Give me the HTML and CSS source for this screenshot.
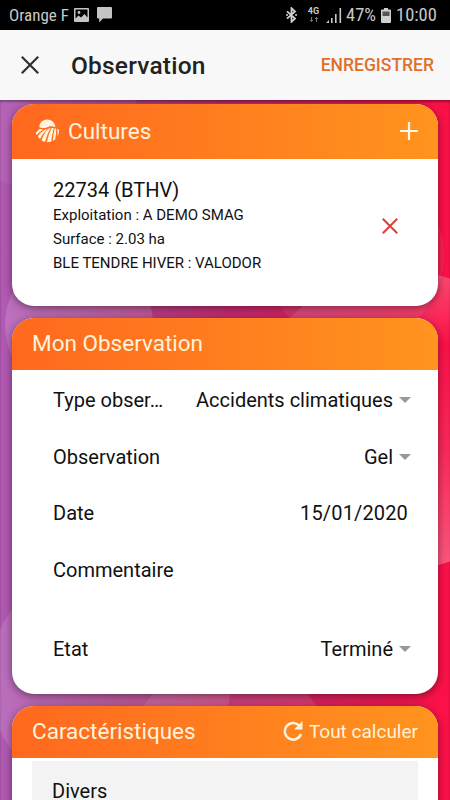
FILE: index.html
```
<!DOCTYPE html>
<html lang="fr">
  <head>
    <meta charset="UTF-8">
    <meta name="viewport" content="width=device-width, initial-scale=1.0">
    <title>Observation</title>
    <link rel="stylesheet" href="styles.css">
  </head>
  <body>
    <div class="status-bar">
      <span class="carrier">Orange F</span>
      <svg class="icon-image" width="15" height="14" viewBox="0 0 15 14">
        <path fill="#c4c4c4" fill-rule="evenodd" d="M1 0h13a1 1 0 0 1 1 1v12a1 1 0 0 1-1 1H1a1 1 0 0 1-1-1V1a1 1 0 0 1 1-1zM1.500 1.500v9l3-3 2.500 2 3.500-3.500 3 3.500v-8z"/>
        <circle cx="5" cy="4.500" r="1.400" fill="#c4c4c4"/>
      </svg>
      <svg class="icon-message" width="15" height="16" viewBox="0 0 15 16">
        <path fill="#c4c4c4" d="M1 0h13a1 1 0 0 1 1 1v9.500a1 1 0 0 1-1 1H6L2.200 15.500V11.500H1a1 1 0 0 1-1-1V1a1 1 0 0 1 1-1z"/>
      </svg>
      <div class="status-right">
        <svg width="11" height="16" viewBox="0 0 11 16">
          <path fill="none" stroke="#d0d0d0" stroke-width="1.800" d="M1 4.300l8 7.200-3.500 3.300V1.200L9 4.500l-8 7.200M.3 8h1.500M9.300 8h1.500"/>
        </svg>
        <div class="network">
          <span>4G</span>
          <svg width="10" height="5" viewBox="0 0 10 5">
            <path fill="none" stroke="#777" d="M2.500 0v4.500M1 3l1.500 1.500L4 3M7.500 5V.5M6 2L7.500.5 9 2"/>
          </svg>
        </div>
        <svg class="signal" width="16" height="15" viewBox="0 0 16 15">
          <path fill="#c8c8c8" d="M0 15l3-3v3zM5 10h1.600v5H5zM9 6h1.600v9H9zM13.500 0h1.600v15h-1.600z"/>
        </svg>
        <span class="percent">47%</span>
        <svg class="battery" width="10" height="15" viewBox="0 0 10 15">
          <path fill="#d0d0d0" d="M3 0h4v1.500h2a1 1 0 0 1 1 1V14a1 1 0 0 1-1 1H1a1 1 0 0 1-1-1V2.500a1 1 0 0 1 1-1h2z"/>
          <path fill="#555" d="M1.500 3.500h7V8h-7z"/>
        </svg>
        <span class="clock">10:00</span>
      </div>
    </div>

    <header class="toolbar">
      <svg class="close" width="18" height="18" viewBox="0 0 18 18">
        <path fill="none" stroke="#303030" stroke-width="2.200" d="M.8.8l16.400 16.400M17.200.8L.8 17.200"/>
      </svg>
      <h1>Observation</h1>
      <span class="save">ENREGISTRER</span>
    </header>

    <main class="content">
      <svg class="backdrop" width="450" height="700" viewBox="0 100 450 700">
        <g fill="#fff">
          <circle cx="30" cy="75" r="110" opacity=".06"/>
          <circle cx="79" cy="325" r="74" opacity=".14"/>
          <circle cx="354" cy="255" r="90" opacity=".07"/>
          <circle cx="400" cy="420" r="150" fill="url(#glow)"/>
          <circle cx="110" cy="680" r="121" opacity=".12"/>
          <circle cx="230" cy="760" r="102" opacity=".1"/>
        </g>
        <defs>
          <linearGradient id="glow" x1="0" y1="0" x2="0" y2="1">
            <stop offset="0" stop-color="#fff" stop-opacity=".25"/>
            <stop offset=".25" stop-color="#fff" stop-opacity="0"/>
            <stop offset=".6" stop-color="#fff" stop-opacity=".1"/>
            <stop offset="1" stop-color="#fff" stop-opacity=".3"/>
          </linearGradient>
        </defs>
      </svg>

      <section class="card">
        <div class="card-header cultures-header">
          <svg class="field-icon" width="25" height="24" viewBox="0 0 25 24">
            <path fill="#fff3dc" d="M4.300 8.200C4.500 3.500 8 .5 12.300.5S20 3.500 20.400 8.200C17 7 14.500 7.200 12.300 8.200 9.500 9.500 7 9.200 4.300 8.200z"/>
            <path fill="#fff3dc" d="M4.500 9.900l4 .6Q4.500 12.500 1.800 16L.6 13.900zM9.600 10.700l2.800-.5Q7.500 14.500 5 20L2.600 17.600Q5 13.500 9.600 10.700zM13.400 9.700l2.400-.6Q12 15 10 23L6.600 21.400Q8.500 14.500 13.400 9.700zM16.700 9l2-.1Q17 16 16.200 22.800L11.800 23.300Q13.500 15 16.700 9zM19.700 9.200l1.500.3Q21.200 15 20.200 20.500L17.800 22Q18.200 15 19.700 9.200zM22.200 10l1.800.6Q24.500 14 22.400 17.700 22.700 13.500 22.200 10z"/>
          </svg>
          <h2>Cultures</h2>
          <svg class="plus" width="18" height="18" viewBox="0 0 18 18">
            <path stroke="#fffbe8" stroke-width="2.200" d="M9 0v18M0 9h18"/>
          </svg>
        </div>
        <div class="culture">
          <div class="culture-text">
            <div class="culture-name">22734 (BTHV)</div>
            <div>Exploitation : A DEMO SMAG</div>
            <div>Surface : 2.03 ha</div>
            <div>BLE TENDRE HIVER : VALODOR</div>
          </div>
          <svg class="remove" width="16" height="16" viewBox="0 0 16 16">
            <path stroke="#e03c36" stroke-width="2" d="M.8.8l14.400 14.400M15.200.8L.8 15.200"/>
          </svg>
        </div>
      </section>

      <section class="card">
        <div class="card-header">
          <h2>Mon Observation</h2>
        </div>
        <div class="fields">
          <div class="field">
            <span>Type obser…</span>
            <span class="value select">Accidents climatiques</span>
          </div>
          <div class="field">
            <span>Observation</span>
            <span class="value select">Gel</span>
          </div>
          <div class="field">
            <span>Date</span>
            <span class="value date">15/01/2020</span>
          </div>
          <div class="field comment">
            <span>Commentaire</span>
          </div>
          <div class="field">
            <span>Etat</span>
            <span class="value select">Terminé</span>
          </div>
        </div>
      </section>

      <section class="card">
        <div class="card-header">
          <h2>Caractéristiques</h2>
          <div class="compute">
            <svg width="20" height="20" viewBox="0 0 20 20">
              <path fill="none" stroke="#fff3dc" stroke-width="2.500" d="M18 13A8.300 8.300 0 1 1 15.800 4.200"/>
              <path fill="#fff3dc" d="M19.500 0v8.500H11z"/>
            </svg>
            <span>Tout calculer</span>
          </div>
        </div>
        <div class="group">Divers</div>
      </section>
    </main>
  </body>
</html>
```

FILE: styles.css
```
body, html {
  margin: 0;
  padding: 0;
  width: 100%;
  height: 100%;
}

body {
  display: flex;
  flex-direction: column;
  overflow: hidden;
  font-family: Roboto, "Liberation Sans", sans-serif;
  font-size: 20px;
  color: #111;
}

svg {
  display: block;
  flex: none;
}

h1, h2 {
  margin: 0;
  font-size: inherit;
  font-weight: normal;
}

.status-bar {
  flex: none;
  display: flex;
  align-items: center;
  height: 30px;
  box-sizing: border-box;
  padding: 0 13px 0 9px;
  background-color: #000;
  color: #c8c8c8;
}

.carrier {
  width: 65px;
  font-size: 17px;
  font-stretch: 75%;
  white-space: nowrap;
}

.icon-message {
  margin-left: 8px;
}

.status-right {
  display: flex;
  align-items: center;
  margin-left: auto;
  font-size: 18.5px;
}

.network {
  display: flex;
  flex-direction: column;
  align-items: center;
  gap: 2px;
  width: 13px;
  margin: 0 6px 0 10px;
  font-size: 9px;
  font-weight: bold;
  line-height: 7px;
}

.percent {
  width: 30px;
  margin: 0 5px 0 4px;
  font-stretch: 75%;
}

.clock {
  width: 41px;
  margin-left: 5px;
  font-stretch: 75%;
}

.toolbar {
  flex: none;
  display: flex;
  align-items: center;
  height: 70px;
  box-sizing: border-box;
  padding: 0 16px 0 21px;
  background-color: #f8f8f8;
}

.toolbar h1 {
  margin-left: 32px;
  font-size: 24.5px;
  font-weight: 500;
  letter-spacing: 0.2px;
  color: #222;
}

.save {
  margin-left: auto;
  padding-bottom: 1px;
  font-size: 17.5px;
  font-weight: 500;
  color: #e0702c;
}

.content {
  position: relative;
  flex: 1;
  display: flex;
  flex-direction: column;
  gap: 12px;
  min-height: 0;
  padding: 4px 12px 0;
  overflow: hidden;
  background: linear-gradient(90deg, #b15ab4 0%, #b0468f 25%, #c22b70 50%, #e01c56 80%, #fa1148 97%);
  box-shadow: inset 0 2px 2px rgba(0, 0, 0, 0.35);
}

.backdrop {
  position: absolute;
  top: 0;
  left: 0;
}

.card {
  position: relative;
  flex: none;
  border-radius: 22px;
  background-color: #fff;
  box-shadow: 0 2px 8px rgba(0, 0, 0, 0.45);
}

.card-header {
  display: flex;
  align-items: center;
  height: 52px;
  box-sizing: border-box;
  padding: 0 20px 2px;
  border-radius: 22px 22px 0 0;
  background: linear-gradient(90deg, #ff681e, #ff941e);
  color: #fff3dc;
}

.card-header h2 {
  font-size: 22.5px;
}

.cultures-header {
  height: 55px;
  padding-left: 23px;
}

.field-icon {
  margin-right: 8px;
}

.plus {
  margin-left: auto;
}

.culture {
  display: flex;
  align-items: center;
  justify-content: space-between;
  height: 147px;
  box-sizing: border-box;
  padding: 0 40px 14px 41px;
}

.culture-text {
  padding-top: 1px;
  font-size: 15px;
  line-height: 24px;
}

.culture-name {
  font-size: 20px;
  line-height: 26px;
}

.fields {
  padding: 2px 27px 17px 41px;
}

.field {
  display: flex;
  align-items: center;
  justify-content: space-between;
  height: 56.4px;
}

.select::after {
  content: "";
  display: inline-block;
  margin-left: 6px;
  border: 6px solid transparent;
  border-top-color: #999;
  border-bottom: 0;
  vertical-align: 4px;
}

.date {
  margin-right: 3px;
  letter-spacing: 0.15px;
}

.comment {
  box-sizing: border-box;
  height: 79.8px;
  padding-bottom: 23px;
}

.compute {
  display: flex;
  align-items: center;
  gap: 6px;
  margin-left: auto;
  font-size: 19px;
}

.group {
  height: 60px;
  margin: 3px 20px 0;
  padding: 0 20px;
  background-color: #f3f3f3;
  line-height: 61px;
}
```
